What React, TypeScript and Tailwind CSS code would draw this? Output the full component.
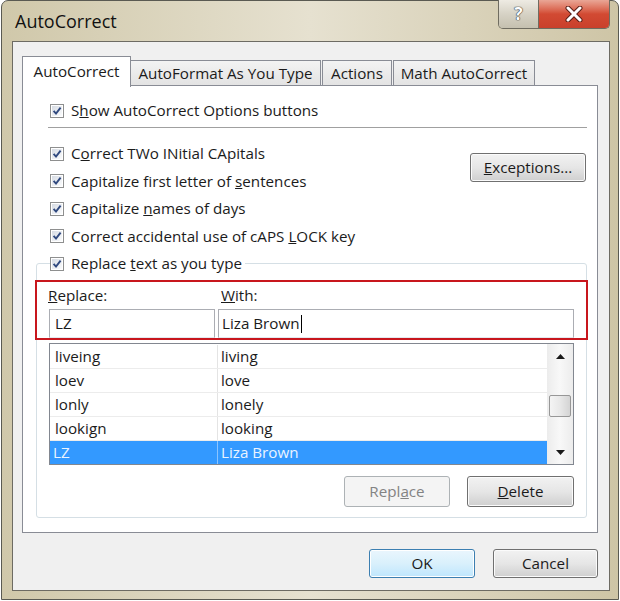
import React from "react";

function Check() {
  return (
    <span className="flex h-[14px] w-[14px] shrink-0 items-center justify-center border border-[#8e8f8f] bg-white">
      <span className="flex h-[10px] w-[10px] items-center justify-center bg-gradient-to-br from-[#d6dbe3] to-[#fbfcfd]">
        <svg width="10" height="10" viewBox="0 0 10 10">
          <path d="M1.6 4.8 L4 7.6 L8.6 1.6" stroke="#30497f" strokeWidth="1.9" fill="none" />
        </svg>
      </span>
    </span>
  );
}

function CheckRow({ children, className = "h-[27.5px]" }: { children: React.ReactNode; className?: string }) {
  return (
    <div className={`flex items-center gap-[7px] ${className}`}>
      <Check />
      <span className="whitespace-nowrap">{children}</span>
    </div>
  );
}

function Btn({
  children,
  className = "",
  variant = "normal",
}: {
  children: React.ReactNode;
  className?: string;
  variant?: "normal" | "focus" | "disabled";
}) {
  const look =
    variant === "focus"
      ? "border-[#3c7fb1] bg-gradient-to-b from-[#eaf6fd] via-[#d9f0fc] to-[#bee6fd] shadow-[inset_0_0_0_1px_#ffffff]"
      : variant === "disabled"
      ? "border-[#adb2b5] bg-[#f4f4f4] text-[#838383]"
      : "border-[#707070] bg-gradient-to-b from-[#f2f2f2] via-[#e6e6e6] to-[#cfcfcf] shadow-[inset_0_0_0_1px_#fbfbfb]";
  return (
    <div className={`flex items-center justify-center rounded-[3px] border ${look} ${className}`}>{children}</div>
  );
}

const rows = [
  ["liveing", "living"],
  ["loev", "love"],
  ["lonly", "lonely"],
  ["lookign", "looking"],
];

export default function App() {
  return (
    <div className="h-[601px] w-[620px] bg-white px-px font-['Open_Sans',sans-serif] text-[15.2px] text-[#1b1b1b]">
      <div className="flex h-[600px] flex-col rounded-t-[7px] border border-[#5a5a52] bg-gradient-to-r from-[#d0c8aa] via-[#e6e1d0] to-[#cec5a6]">
        {/* title bar */}
        <div className="flex h-[40px] items-start justify-between">
          <div className="pl-[13px] pt-[7px] text-[18px] text-[#111]">AutoCorrect</div>
          <div className="mr-[8px] -mt-px flex h-[29px] overflow-hidden rounded-b-[5px] border border-t-0 border-[#6f6c60]">
            <div className="flex w-[40px] items-center justify-center border-r border-[#6f6c60] bg-gradient-to-b from-[#eeebe3] via-[#d6d2c5] to-[#c5c0af] text-[17px] font-bold text-white [text-shadow:0_0_1px_#3a3a3a,0_0_1px_#3a3a3a,0_0_1px_#3a3a3a]">
              ?
            </div>
            <div className="flex w-[70px] items-center justify-center bg-gradient-to-b from-[#e9a696] via-[#d24a33] to-[#c9402c]">
              <svg width="20" height="16" viewBox="0 0 20 16">
                <path d="M4 2 L16 14 M16 2 L4 14" stroke="#5a1f17" strokeWidth="5" strokeLinecap="round" />
                <path d="M4 2 L16 14 M16 2 L4 14" stroke="#ffffff" strokeWidth="3" strokeLinecap="round" />
              </svg>
            </div>
          </div>
        </div>

        {/* client area */}
        <div className="mb-[8px] ml-[10px] mr-[8px] flex flex-1 flex-col border border-[#6d6b63] bg-[#f0f0f0] pl-[9px] pr-[11px] pt-[14px]">
          {/* tabs */}
          <div className="flex h-[29px] items-end">
            <div className="relative z-10 -mb-[2px] flex h-[31px] w-[109px] items-start justify-center border border-b-0 border-[#898c95] bg-white pt-[3px]">
              AutoCorrect
            </div>
            <div className="flex h-[25px] w-[190px] items-center justify-center border border-b-0 border-l-0 border-[#898c95] bg-gradient-to-b from-[#f3f3f3] to-[#e3e3e3]">
              AutoFormat As You Type
            </div>
            <div className="ml-[1px] flex h-[25px] w-[70px] items-center justify-center border border-b-0 border-[#898c95] bg-gradient-to-b from-[#f3f3f3] to-[#e3e3e3]">
              Actions
            </div>
            <div className="ml-[1px] flex h-[25px] w-[142px] items-center justify-center border border-b-0 border-[#898c95] bg-gradient-to-b from-[#f3f3f3] to-[#e3e3e3]">
              Math AutoCorrect
            </div>
          </div>

          {/* tab panel */}
          <div className="flex h-[448px] flex-col border border-[#898c95] bg-white pt-[11px]">
            <div className="pl-[27px]">
              <CheckRow className="h-[27px]">
                S<u>h</u>ow AutoCorrect Options buttons
              </CheckRow>
            </div>
            <div className="ml-[25px] mr-[10px] mt-[3px] h-px bg-[#a0a0a0]" />

            <div className="mt-[12px] flex justify-between">
              <div className="pl-[27px]">
                <CheckRow>
                  C<u>o</u>rrect TWo INitial CApitals
                </CheckRow>
                <CheckRow>
                  Capitalize first letter of <u>s</u>entences
                </CheckRow>
                <CheckRow>
                  Capitalize <u>n</u>ames of days
                </CheckRow>
                <CheckRow>
                  Correct accidental use of cAPS <u>L</u>OCK key
                </CheckRow>
              </div>
              <Btn className="mr-[11px] mt-[13px] h-[29px] w-[116px]">
                <span>
                  <u>E</u>xceptions...
                </span>
              </Btn>
            </div>

            <fieldset className="mb-[13px] ml-[13px] mr-[10px] rounded-[3px] border border-[#d5dfe5] pb-[10px]">
              <legend className="ml-[13px] pr-[3px]">
                <CheckRow className="h-[27px]">
                  Replace <u>t</u>ext as you type
                </CheckRow>
              </legend>

              {/* red highlight around inputs */}
              <div className="-mx-[2px] mt-[3px] h-[60px] border-2 border-[#c8161d] pl-[12px]">
                <div className="grid grid-cols-[166px_356px] gap-x-[3px]">
                  <div className="flex h-[27px] items-center -ml-px">
                    <span>
                      <u>R</u>eplace:
                    </span>
                  </div>
                  <div className="flex h-[27px] items-center pl-[3px]">
                    <span>
                      <u>W</u>ith:
                    </span>
                  </div>
                  <div className="flex h-[29px] items-center border border-[#abadb3] border-b-[#e3e9ef] bg-white pl-[5px]">
                    LZ
                  </div>
                  <div className="flex h-[29px] items-center border border-[#abadb3] border-b-[#e3e9ef] bg-white pl-[3px]">
                    Liza Brown
                    <span className="ml-px h-[18px] w-px bg-black" />
                  </div>
                </div>
              </div>

              {/* list */}
              <div className="ml-[12px] mt-[3px] flex h-[122px] w-[525px] border border-[#828790] bg-white">
                <div className="flex flex-1 flex-col pt-px">
                  {rows.map(([a, b]) => (
                    <div key={a} className="flex h-[24px] border-b border-[#ececec]">
                      <div className="flex w-[168px] items-center border-r border-[#e4e4e4] pl-[5px]">{a}</div>
                      <div className="flex flex-1 items-center pl-[3px]">{b}</div>
                    </div>
                  ))}
                  <div className="flex h-[23px] bg-[#3399ff] text-[#eaf3ff]">
                    <div className="flex w-[168px] items-center border-r border-[#8cc4ff] pl-[3px]">LZ</div>
                    <div className="flex flex-1 items-center pl-[3px]">Liza Brown</div>
                  </div>
                </div>
                <div className="flex w-[26px] flex-col bg-gradient-to-r from-[#ececec] via-[#f8f8f8] to-[#ececec] px-[2px]">
                  <div className="flex h-[24px] items-center justify-center">
                    <svg width="9" height="5" viewBox="0 0 9 5">
                      <path d="M0 5 L4.5 0 L9 5 Z" fill="#1a1a1a" />
                    </svg>
                  </div>
                  <div className="flex-1">
                    <div className="mt-[27px] h-[22px] rounded-[2px] border border-[#979797] bg-gradient-to-r from-[#f4f4f4] via-[#e8e8e8] to-[#d4d4d4]" />
                  </div>
                  <div className="flex h-[24px] items-center justify-center">
                    <svg width="9" height="5" viewBox="0 0 9 5">
                      <path d="M0 0 L9 0 L4.5 5 Z" fill="#1a1a1a" />
                    </svg>
                  </div>
                </div>
              </div>

              <div className="mr-[12px] mt-[11px] flex justify-end gap-[17px]">
                <Btn variant="disabled" className="h-[31px] w-[106px]">
                  <span>
                    Repl<u>a</u>ce
                  </span>
                </Btn>
                <Btn className="h-[31px] w-[107px]">
                  <span>
                    <u>D</u>elete
                  </span>
                </Btn>
              </div>
            </fieldset>
          </div>

          {/* dialog buttons */}
          <div className="mt-[16px] flex justify-end gap-[18px]">
            <Btn variant="focus" className="h-[29px] w-[106px]">
              OK
            </Btn>
            <Btn className="h-[29px] w-[105px]">Cancel</Btn>
          </div>
        </div>
      </div>
    </div>
  );
}
